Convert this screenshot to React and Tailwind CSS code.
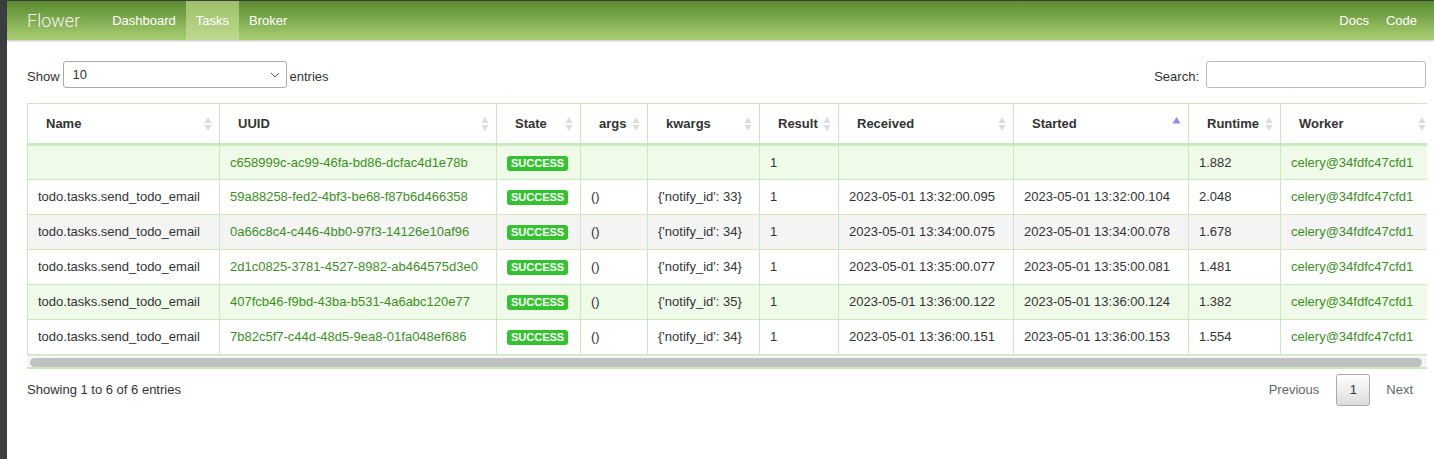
import React from "react";

const cols = [
  { key: "name", label: "Name", w: 192 },
  { key: "uuid", label: "UUID", w: 277 },
  { key: "state", label: "State", w: 84 },
  { key: "args", label: "args", w: 67 },
  { key: "kwargs", label: "kwargs", w: 112 },
  { key: "result", label: "Result", w: 79 },
  { key: "received", label: "Received", w: 175 },
  { key: "started", label: "Started", w: 175, sorted: true },
  { key: "runtime", label: "Runtime", w: 92 },
  { key: "worker", label: "Worker", w: 152 },
];

const rows = [
  { name: "", uuid: "c658999c-ac99-46fa-bd86-dcfac4d1e78b", args: "", kwargs: "", received: "", started: "", runtime: "1.882", bg: "bg-[#effbe8]" },
  { name: "todo.tasks.send_todo_email", uuid: "59a88258-fed2-4bf3-be68-f87b6d466358", args: "()", kwargs: "{'notify_id': 33}", received: "2023-05-01 13:32:00.095", started: "2023-05-01 13:32:00.104", runtime: "2.048", bg: "bg-white" },
  { name: "todo.tasks.send_todo_email", uuid: "0a66c8c4-c446-4bb0-97f3-14126e10af96", args: "()", kwargs: "{'notify_id': 34}", received: "2023-05-01 13:34:00.075", started: "2023-05-01 13:34:00.078", runtime: "1.678", bg: "bg-[#f4f4f4]" },
  { name: "todo.tasks.send_todo_email", uuid: "2d1c0825-3781-4527-8982-ab464575d3e0", args: "()", kwargs: "{'notify_id': 34}", received: "2023-05-01 13:35:00.077", started: "2023-05-01 13:35:00.081", runtime: "1.481", bg: "bg-white" },
  { name: "todo.tasks.send_todo_email", uuid: "407fcb46-f9bd-43ba-b531-4a6abc120e77", args: "()", kwargs: "{'notify_id': 35}", received: "2023-05-01 13:36:00.122", started: "2023-05-01 13:36:00.124", runtime: "1.382", bg: "bg-[#effbe8]" },
  { name: "todo.tasks.send_todo_email", uuid: "7b82c5f7-c44d-48d5-9ea8-01fa048ef686", args: "()", kwargs: "{'notify_id': 34}", received: "2023-05-01 13:36:00.151", started: "2023-05-01 13:36:00.153", runtime: "1.554", bg: "bg-white" },
];

// double gray arrows used on unsorted columns
function SortBoth() {
  return (
    <svg width="8" height="16" viewBox="0 0 8 16" className="shrink-0">
      <path d="M4 1 L7.5 7 H0.5 Z" fill="#dcdcdc" />
      <path d="M4 15 L7.5 9 H0.5 Z" fill="#dcdcdc" />
    </svg>
  );
}

function SortAsc() {
  return (
    <svg width="9" height="16" viewBox="0 0 9 16" className="shrink-0">
      <path d="M4.5 1 L8.5 7.5 H0.5 Z" fill="#8c8ee8" />
    </svg>
  );
}

export default function App() {
  return (
    <div className="flex min-h-[459px] bg-white text-[13px] text-[#333]" style={{ fontFamily: '"Liberation Sans", Arial, sans-serif' }}>
      <div className="w-[7px] shrink-0 bg-[#3b3e41]" />
      <div className="flex-1 min-w-0">
        <div className="h-px bg-[#3b3e41]" />
        {/* Navbar */}
        <nav className="h-[39px] flex items-stretch bg-gradient-to-b from-[#5b8b2f] to-[#a9cf73] shadow-[0_1px_2px_rgba(0,0,0,0.25)]">
          <div className="pl-5 pr-[22px] flex items-center text-[18px] font-light text-[#f2f2f2]" style={{ fontFamily: "Roboto, sans-serif" }}>Flower</div>
          <a className="px-[10px] flex items-center text-white">Dashboard</a>
          <a className="px-[10px] flex items-center text-white bg-gradient-to-b from-[#9ec06b] to-[#bdd98e]">Tasks</a>
          <a className="px-[10px] flex items-center text-white">Broker</a>
          <div className="flex-1" />
          <a className="px-[9px] flex items-center text-white">Docs</a>
          <a className="pl-[8px] pr-[17px] flex items-center text-white">Code</a>
        </nav>

        <div className="pl-5 pr-2">
          {/* Controls */}
          <div className="flex items-center justify-between mt-[21px] h-[27px]">
            <div className="flex items-center gap-[3px]">
              <span className="pt-[4px]">Show</span>
              <div className="relative w-[224px] h-[27px] border border-[#aaa] rounded-[3px] bg-white flex items-center pl-[9px]">
                <span>10</span>
                <svg width="10" height="6" viewBox="0 0 10 6" className="absolute right-[6px] top-[10px]">
                  <path d="M1 1 L5 5 L9 1" fill="none" stroke="#555" strokeWidth="1" />
                </svg>
              </div>
              <span className="pt-[4px]">entries</span>
            </div>
            <div className="flex items-center gap-[7px]">
              <span className="pt-[4px]">Search:</span>
              <div className="w-[220px] h-[27px] border border-[#bbb] rounded-[3px] bg-white" />
            </div>
          </div>

          {/* Table */}
          <div className="mt-[15px] overflow-hidden mr-[-1px]">
            <table className="table-fixed border-collapse" style={{ width: cols.reduce((s, c) => s + c.w, 0) }}>
              <colgroup>
                {cols.map((c) => (
                  <col key={c.key} style={{ width: c.w }} />
                ))}
              </colgroup>
              <thead>
                <tr className="h-[41px] bg-white">
                  {cols.map((c) => (
                    <th
                      key={c.key}
                      className="border-t border-l border-[#cbe9bd] border-b-[3px] font-bold text-left pl-[18px] pr-[7px] text-[13px] text-[#333]"
                    >
                      <div className="flex items-center justify-between">
                        <span>{c.label}</span>
                        {c.sorted ? <SortAsc /> : <SortBoth />}
                      </div>
                    </th>
                  ))}
                </tr>
              </thead>
              <tbody>
                {rows.map((r, i) => (
                  <tr key={i} className={`h-[35px] ${r.bg}`}>
                    <td className="border border-[#cbe9bd] px-[10px] whitespace-nowrap">{r.name}</td>
                    <td className="border border-[#cbe9bd] px-[10px] whitespace-nowrap text-[#3b8f1f]">{r.uuid}</td>
                    <td className="border border-[#cbe9bd] px-[10px]">
                      <span className="inline-block bg-[#34c231] text-white font-bold text-[11px] leading-[15px] px-[4px] rounded-[3px]">SUCCESS</span>
                    </td>
                    <td className="border border-[#cbe9bd] px-[10px]">{r.args}</td>
                    <td className="border border-[#cbe9bd] px-[10px] whitespace-nowrap">{r.kwargs}</td>
                    <td className="border border-[#cbe9bd] px-[10px]">1</td>
                    <td className="border border-[#cbe9bd] px-[10px] whitespace-nowrap">{r.received}</td>
                    <td className="border border-[#cbe9bd] px-[10px] whitespace-nowrap">{r.started}</td>
                    <td className="border border-[#cbe9bd] px-[10px]">{r.runtime}</td>
                    <td className="border border-[#cbe9bd] border-r-0 px-[10px] whitespace-nowrap text-[#3b8f1f]">celery@34fdfc47cfd1</td>
                  </tr>
                ))}
              </tbody>
            </table>
            {/* horizontal scrollbar */}
            <div className="h-[14px] bg-[#f6f6f6] border-t border-[#e6e6e6] border-b-2 border-b-[#cbe9bd] px-[3px] pt-[2px]">
              <div className="h-[9px] w-[1392px] rounded-full bg-[#c1c1c1]" />
            </div>
          </div>

          {/* Footer */}
          <div className="flex items-center justify-between mt-[5px] h-[32px]">
            <div>Showing 1 to 6 of 6 entries</div>
            <div className="flex items-center">
              <span className="pr-[17px] text-[#666]">Previous</span>
              <span className="w-[34px] h-[32px] flex items-center justify-center border border-[#aaa] rounded-[3px] bg-gradient-to-b from-white to-[#dcdcdc] text-[#333]">1</span>
              <span className="pl-[16px] pr-[13px] text-[#666]">Next</span>
            </div>
          </div>
        </div>
      </div>
    </div>
  );
}
